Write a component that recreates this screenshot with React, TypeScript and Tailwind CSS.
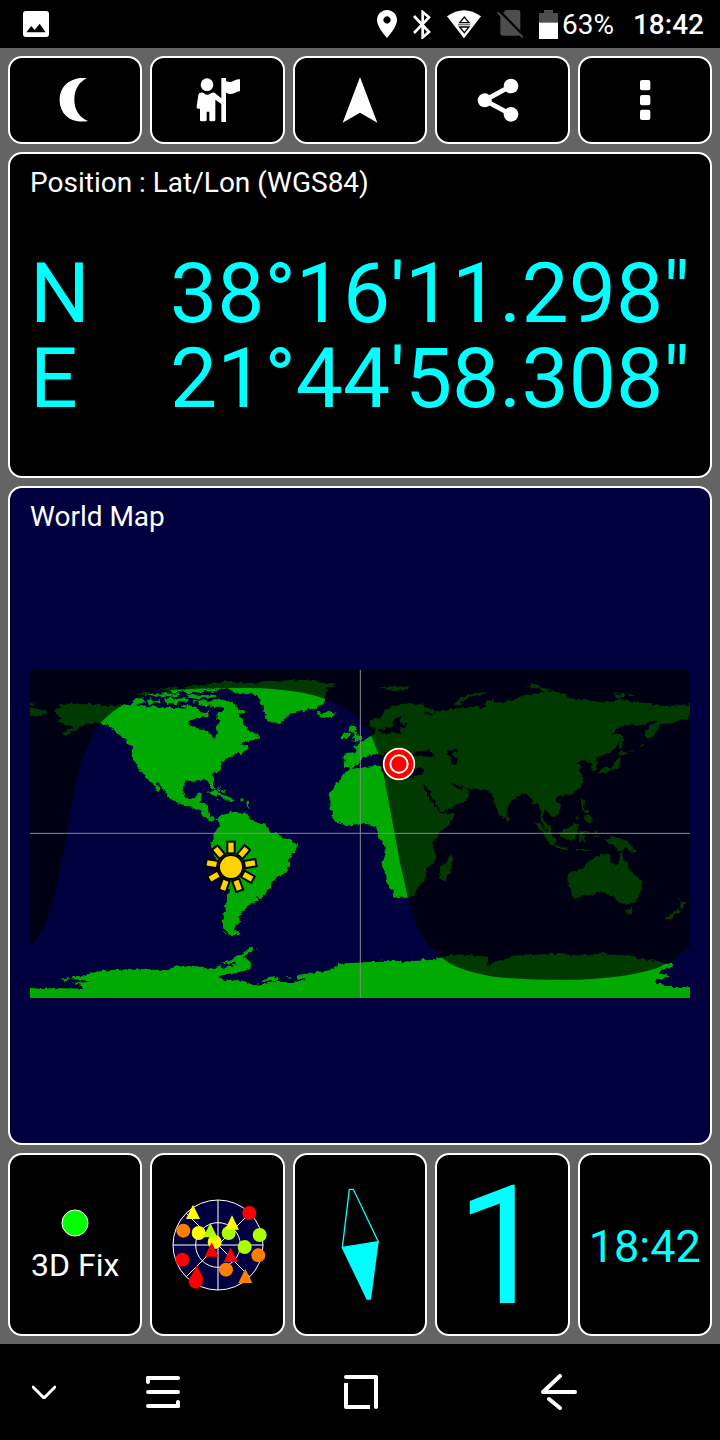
import type { ReactNode } from "react";

const OCEAN = "#00003f";
const LAND = "#00aa00";

// one path per land mass, 3 units to the pixel, 90N/180W in the top left corner
const landMasses = [
  // north and central america
  "M75 120 L90 113 L88 108 L95 105 L112 104 L116 101 L135 99 L150 103 L170 101 L186 104 L205 103 L214 107 L232 108 L244 106 L262 107 L282 104 L300 104 L315 100 L330 105 L345 107 L355 112 L370 109 L385 114 L402 112 L420 111 L430 115 L445 113 L460 116 L470 114 L475 104 L490 108 L500 112 L506 116 L510 126 L528 130 L540 118 L540 106 L520 108 L505 104 L502 92 L520 90 L532 95 L552 88 L575 89 L600 95 L618 104 L622 113 L635 118 L647 122 L645 130 L625 130 L628 140 L637 146 L640 160 L648 168 L658 184 L672 188 L678 192 L686 198 L687 206 L676 206 L668 211 L655 215 L630 220 L640 226 L654 225 L655 240 L640 244 L636 252 L620 248 L612 254 L605 264 L588 266 L580 276 L572 279 L577 290 L572 300 L560 306 L548 313 L546 320 L552 336 L552 356 L546 358 L540 350 L536 338 L530 329 L515 332 L500 330 L482 333 L470 330 L460 340 L458 365 L464 382 L480 388 L494 382 L498 374 L515 370 L515 380 L508 396 L530 403 L534 412 L536 430 L542 440 L555 446 L570 448 L568 456 L556 448 L540 452 L525 440 L516 432 L510 424 L490 418 L478 407 L450 402 L432 394 L410 378 L408 370 L400 358 L392 347 L384 340 L376 336 L382 346 L391 358 L388 362 L376 356 L372 346 L360 333 L350 324 L345 314 L332 306 L328 298 L320 286 L316 276 L309 270 L309 228 L300 226 L296 220 L290 218 L286 208 L277 204 L270 192 L258 186 L254 180 L244 175 L236 166 L220 162 L210 159 L195 160 L180 163 L172 158 L165 158 L156 170 L140 178 L122 184 L114 190 L102 196 L95 190 L110 182 L126 178 L130 168 L118 170 L104 166 L98 158 L82 155 L90 148 L100 146 L88 141 L80 135 Z",
  // far end of siberia, west of the date line
  "M-20 112 L0 112 L12 114 L25 122 L42 120 L58 128 L40 133 L38 140 L22 134 L0 137 L-20 137 Z M-20 95 L14 98 L14 104 L-20 103 Z",
  // arctic archipelago
  "M300 98 L312 90 L320 84 L342 86 L344 97 L332 100 L318 102 Z M322 72 L340 65 L362 64 L360 72 L340 76 Z M350 78 L362 74 L380 72 L405 70 L430 72 L446 69 L450 74 L430 80 L405 77 L380 80 Z M348 90 L360 87 L372 92 L390 88 L392 96 L372 98 L362 105 L350 97 Z M400 86 L420 84 L440 88 L460 84 L478 89 L468 98 L445 96 L440 103 L420 98 L410 103 L404 94 Z M412 60 L436 54 L450 58 L470 55 L492 58 L520 56 L556 60 L562 66 L545 68 L530 62 L510 68 L490 66 L470 70 L455 64 L432 68 Z M470 76 L492 72 L508 78 L540 74 L558 76 L560 82 L520 84 L496 86 L480 83 Z M488 90 L500 90 L498 98 L488 97 Z M450 104 L466 106 L474 114 L458 112 Z",
  // ellesmere
  "M458 54 L476 50 L492 47 L520 44 L545 42 L560 38 L585 34 L612 37 L640 36 L632 42 L610 46 L600 52 L585 56 L560 57 L530 56 L500 58 L478 56 Z M386 58 L412 52 L436 52 L430 58 L400 63 Z",
  // greenland
  "M592 54 L612 46 L640 40 L680 38 L712 36 L745 34 L780 30 L832 30 L862 32 L868 38 L890 38 L922 42 L905 46 L918 50 L898 52 L886 56 L892 64 L886 72 L884 82 L880 92 L878 102 L866 108 L864 116 L842 118 L820 124 L808 124 L794 130 L780 130 L776 138 L764 146 L757 154 L754 166 L738 158 L718 156 L710 146 L706 134 L700 122 L704 116 L696 104 L688 96 L692 90 L680 78 L668 72 L645 70 L625 73 L612 66 Z",
  // iceland, britain, ireland
  "M860 130 L866 125 L876 130 L890 127 L905 123 L917 130 L910 138 L890 144 L868 141 L872 135 Z",
  "M958 170 L966 166 L980 168 L977 178 L974 184 L985 196 L996 202 L998 208 L988 214 L962 216 L974 206 L966 202 L974 198 L970 188 L958 186 L954 176 Z M938 192 L946 187 L960 190 L954 206 L946 206 L934 208 Z",
  // caribbean
  "M526 370 L540 366 L555 362 L575 372 L590 378 L608 387 L590 390 L578 382 L560 376 L545 371 Z M588 386 L610 386 L608 392 L584 391 Z M560 390 L570 390 L566 394 Z M630 388 L640 388 L640 394 L632 394 Z M562 352 L568 352 L572 360 L566 362 Z M576 360 L584 362 L586 370 L578 366 Z M648 392 L656 392 L658 418 L652 412 Z",
  // south america
  "M564 450 L570 440 L578 434 L590 432 L600 425 L612 424 L620 430 L645 428 L650 436 L660 444 L668 450 L682 458 L696 461 L708 464 L714 474 L722 486 L735 490 L748 498 L758 504 L778 508 L792 514 L802 522 L803 532 L796 544 L786 552 L778 566 L777 584 L773 598 L765 612 L752 616 L740 620 L734 632 L724 636 L723 650 L712 662 L704 676 L694 684 L680 682 L683 692 L672 700 L652 709 L646 722 L634 728 L625 740 L631 752 L628 760 L618 768 L614 778 L626 784 L629 794 L612 796 L600 794 L586 786 L578 772 L576 752 L582 742 L580 734 L588 722 L585 710 L588 698 L593 684 L597 662 L595 630 L585 610 L570 595 L556 572 L552 556 L543 530 L544 512 L550 495 L560 478 L567 470 Z",
  // europe, asia and africa
  "M940 290 L944 272 L940 260 L945 252 L975 250 L980 240 L976 232 L965 230 L980 226 L1000 214 L1008 206 L1022 198 L1036 192 L1035 176 L1044 170 L1048 184 L1058 190 L1058 176 L1040 174 L1022 172 L1018 160 L1020 150 L1036 148 L1050 142 L1058 132 L1068 120 L1085 110 L1100 108 L1120 102 L1142 100 L1160 104 L1175 102 L1184 112 L1208 118 L1215 126 L1205 130 L1182 124 L1185 132 L1205 134 L1222 122 L1236 120 L1250 122 L1262 114 L1270 120 L1282 116 L1300 112 L1322 110 L1340 106 L1352 114 L1366 112 L1358 100 L1370 94 L1388 88 L1394 106 L1398 114 L1394 96 L1410 98 L1424 94 L1432 90 L1450 94 L1466 80 L1486 76 L1510 70 L1534 71 L1544 64 L1560 66 L1580 66 L1602 68 L1610 82 L1630 86 L1652 88 L1680 90 L1695 90 L1708 98 L1724 94 L1750 94 L1770 88 L1790 92 L1812 95 L1830 98 L1860 99 L1870 106 L1900 108 L1930 107 L1955 106 L1972 106 L1980 100 L2000 100 V133 L1980 133 L1972 148 L1950 150 L1932 158 L1910 162 L1890 160 L1884 178 L1870 196 L1858 208 L1848 200 L1845 186 L1856 172 L1876 160 L1884 155 L1860 154 L1842 166 L1810 163 L1778 168 L1760 176 L1746 192 L1766 192 L1774 194 L1782 210 L1774 236 L1768 236 L1771 212 L1766 222 L1758 232 L1740 248 L1724 256 L1706 260 L1698 270 L1702 300 L1688 308 L1685 282 L1672 274 L1655 270 L1640 280 L1654 288 L1650 302 L1660 322 L1656 340 L1650 356 L1622 372 L1604 376 L1582 378 L1576 390 L1588 402 L1592 416 L1588 432 L1574 443 L1562 436 L1552 424 L1540 422 L1538 442 L1548 458 L1560 466 L1570 500 L1566 508 L1554 484 L1534 456 L1530 420 L1526 402 L1510 404 L1508 390 L1490 372 L1468 374 L1450 388 L1436 404 L1432 420 L1430 438 L1420 448 L1404 424 L1394 400 L1390 376 L1372 360 L1335 356 L1310 356 L1290 346 L1270 340 L1262 331 L1270 350 L1282 356 L1296 356 L1302 346 L1308 356 L1320 364 L1314 380 L1296 400 L1262 414 L1236 424 L1228 420 L1222 402 L1206 380 L1180 338 L1182 356 L1200 392 L1218 414 L1234 430 L1256 430 L1275 428 L1266 452 L1250 470 L1230 484 L1222 498 L1208 520 L1210 535 L1218 556 L1216 580 L1198 588 L1188 598 L1188 620 L1178 632 L1168 650 L1155 668 L1140 680 L1116 680 L1090 683 L1088 664 L1076 646 L1070 634 L1068 612 L1055 586 L1064 560 L1064 530 L1058 514 L1044 500 L1044 478 L1038 468 L1020 464 L1012 458 L990 462 L962 465 L950 468 L934 458 L920 456 L904 436 L906 424 L896 412 L902 396 L896 376 L898 368 L908 360 L918 340 L934 330 L940 318 L946 306 L958 300 L960 292 Z",
  // arctic islands of russia and svalbard
  "M1272 102 L1284 92 L1294 82 L1312 76 L1338 70 L1366 66 L1370 70 L1344 76 L1316 82 L1302 92 L1290 100 L1298 106 L1282 106 Z M1050 52 L1068 50 L1100 52 L1120 48 L1140 50 L1128 58 L1112 60 L1088 67 L1070 58 Z M1490 50 L1502 44 L1520 42 L1532 52 L1550 56 L1568 58 L1560 63 L1540 66 L1530 56 L1506 54 Z M1750 70 L1770 72 L1790 72 L1784 78 L1772 78 L1774 86 L1762 84 Z M1794 72 L1810 74 L1816 80 L1802 82 Z",
  // japan, sakhalin tail, kurils
  "M1768 260 L1772 274 L1764 294 L1744 300 L1730 306 L1712 306 L1706 300 L1722 294 L1738 294 L1752 284 L1760 270 Z M1766 242 L1780 244 L1796 250 L1780 256 L1764 256 Z M1796 246 L1810 240 L1812 244 L1798 248 Z M1828 232 L1842 218 L1840 226 L1830 236 Z M1704 304 L1714 304 L1712 310 L1704 308 Z",
  // philippines, sri lanka, madagascar
  "M1654 388 L1664 388 L1664 402 L1660 412 L1674 420 L1680 428 L1672 430 L1660 422 L1652 408 Z M1664 438 L1680 434 L1686 444 L1684 458 L1676 458 L1664 450 Z M1636 448 L1652 426 L1648 434 L1638 450 Z M1430 436 L1442 450 L1434 458 L1428 450 Z M1263 557 L1268 572 L1260 604 L1250 626 L1238 633 L1228 622 L1230 596 L1234 586 L1250 576 L1256 564 Z",
  // indonesia and new guinea
  "M1514 456 L1526 462 L1546 480 L1560 492 L1574 508 L1578 518 L1574 530 L1562 522 L1550 510 L1540 492 L1526 474 Z M1575 527 L1590 528 L1615 532 L1614 537 L1580 534 Z M1588 486 L1606 478 L1622 468 L1634 458 L1644 464 L1642 482 L1643 490 L1636 498 L1630 510 L1604 508 L1592 500 Z M1648 486 L1660 484 L1680 482 L1678 487 L1660 489 L1654 494 L1668 494 L1662 500 L1668 516 L1662 514 L1656 502 L1654 520 L1646 516 L1650 500 Z M1636 536 L1656 538 L1670 540 L1686 536 L1684 541 L1668 544 L1640 541 Z M1694 482 L1700 480 L1702 492 L1696 490 Z M1692 498 L1706 498 L1704 502 L1692 502 Z M1722 505 L1734 510 L1746 502 L1768 504 L1788 510 L1800 520 L1806 530 L1820 542 L1820 550 L1806 548 L1794 536 L1782 534 L1774 544 L1758 538 L1750 522 L1732 516 Z",
  // australia, tasmania, new zealand
  "M1612 630 L1614 616 L1625 606 L1644 600 L1660 594 L1668 580 L1676 572 L1690 568 L1696 558 L1706 562 L1712 554 L1722 556 L1728 552 L1740 554 L1742 574 L1756 586 L1762 586 L1768 572 L1770 550 L1774 548 L1782 570 L1790 578 L1794 594 L1808 606 L1816 620 L1832 630 L1835 654 L1826 676 L1816 696 L1798 702 L1780 704 L1768 696 L1758 690 L1752 678 L1734 672 L1706 667 L1684 674 L1660 678 L1640 684 L1625 682 L1624 664 L1616 648 Z M1788 717 L1798 718 L1807 713 L1806 730 L1798 734 L1790 726 Z M1940 682 L1948 690 L1954 696 L1968 695 L1962 712 L1954 718 L1948 712 L1950 698 Z M1944 717 L1950 720 L1944 730 L1930 740 L1924 748 L1908 748 L1908 740 L1926 732 Z",
  // antarctica
  "M-20 953 L0 953 L35 957 L70 954 L160 956 L154 946 L130 938 L182 936 L155 929 L124 928 L128 918 L168 919 L172 910 L210 904 L250 899 L270 900 L300 896 L310 899 L345 896 L370 899 L420 901 L430 890 L440 886 L455 890 L500 889 L522 894 L560 896 L568 884 L582 886 L575 878 L600 872 L612 862 L626 856 L640 846 L652 842 L658 832 L670 830 L672 840 L660 846 L650 854 L640 862 L655 870 L660 884 L658 898 L640 904 L610 908 L580 916 L564 923 L590 932 L626 930 L650 936 L672 946 L700 941 L740 936 L790 936 L830 930 L800 924 L808 914 L840 910 L880 904 L902 900 L920 886 L940 880 L970 879 L1000 877 L1020 875 L1050 872 L1078 874 L1100 872 L1120 876 L1150 872 L1172 872 L1180 866 L1210 871 L1220 866 L1240 862 L1262 856 L1275 857 L1282 852 L1310 855 L1340 857 L1374 860 L1374 872 L1368 882 L1374 885 L1400 874 L1430 866 L1448 858 L1475 855 L1500 852 L1505 855 L1560 851 L1600 853 L1640 856 L1680 854 L1715 852 L1760 854 L1806 858 L1826 866 L1860 870 L1900 876 L1930 882 L1926 892 L1908 898 L1890 900 L1886 910 L1906 914 L1920 918 L1906 924 L1880 928 L1878 938 L1900 944 L1940 950 L1980 952 L2000 952 V1010 H-20 Z",
  "M690 937 L705 928 L718 920 L744 918 L749 926 L744 932 L715 934 Z M94 926 L112 922 L122 929 L104 930 Z M762 922 L788 922 L780 926 Z M682 838 H686 V841 H682 Z",
];

// hudson bay, mediterranean, black sea, caspian, baltic, weddell inlets
const inlandWaters = [
  "M474 160 L482 152 L494 146 L512 142 L534 142 L536 130 L540 114 L548 108 L562 114 L576 112 L584 120 L572 126 L564 132 L562 146 L568 154 L560 168 L562 184 L558 196 L555 208 L548 206 L546 196 L538 188 L524 180 L510 176 L490 172 L484 166 Z",
  "M965 296 L972 288 L984 284 L992 272 L1000 262 L1016 256 L1040 252 L1056 256 L1066 246 L1080 260 L1110 290 L1150 290 L1162 296 L1184 294 L1180 304 L1174 316 L1150 320 L1110 322 L1064 314 L1056 306 L1052 286 L1036 288 L1010 290 L990 294 Z",
  "M1148 256 L1160 244 L1178 242 L1190 246 L1184 236 L1196 236 L1204 250 L1216 258 L1210 262 L1190 260 L1176 254 L1160 260 Z",
  "M1254 240 L1270 238 L1282 234 L1280 248 L1266 250 L1272 260 L1282 268 L1282 284 L1266 282 L1262 266 L1256 256 Z",
  "M1050 176 L1062 182 L1066 172 L1080 174 L1094 168 L1088 156 L1098 148 L1112 138 L1124 132 L1112 144 L1108 154 L1118 164 L1142 160 L1128 168 L1112 172 L1110 188 L1080 190 L1062 190 Z",
  "M570 888 L588 880 L600 884 L616 874 L622 880 L610 884 L608 892 L594 886 L578 896 Z",
];

const NIGHT =
  "M0 0 H1980 V827 L1960 846 L1930 870 L1880 895 Q1830 910 1770 919 Q1690 930 1600 930 Q1480 930 1390 920 Q1300 905 1252 876 Q1200 838 1172 792 Q1148 745 1133 680 Q1120 620 1110 580 L1093 485 L1060 310 Q1048 255 1028 206 Q1008 160 960 126 Q900 82 810 67 Q740 56 660 54 Q520 53 430 60 Q350 68 300 92 Q250 118 210 160 Q170 220 145 310 Q124 400 108 510 L95 575 Q84 645 60 725 Q42 785 0 832 Z";

const rays = [0, 40, 80, 120, 160, 200, 240, 280, 320];

type Satellite = { shape: "dot" | "tri"; x: number; y: number; color: string };

const satellites: Satellite[] = [
  { shape: "dot", x: 746, y: 202, color: "#ff0000" },
  { shape: "tri", x: 577, y: 198, color: "#ffff00" },
  { shape: "dot", x: 548, y: 255, color: "#ff8000" },
  { shape: "dot", x: 594, y: 262, color: "#ffff00" },
  { shape: "dot", x: 684, y: 262, color: "#aaff00" },
  { shape: "tri", x: 694, y: 230, color: "#ffff00" },
  { shape: "dot", x: 777, y: 268, color: "#aaff00" },
  { shape: "dot", x: 642, y: 289, color: "#ffff00" },
  { shape: "tri", x: 629, y: 253, color: "#aaff00" },
  { shape: "dot", x: 732, y: 304, color: "#aaff00" },
  { shape: "dot", x: 773, y: 329, color: "#ff8000" },
  { shape: "tri", x: 633, y: 311, color: "#ff0000" },
  { shape: "tri", x: 690, y: 327, color: "#ff0000" },
  { shape: "dot", x: 545, y: 342, color: "#ff0000" },
  { shape: "dot", x: 676, y: 372, color: "#ff8000" },
  { shape: "tri", x: 588, y: 379, color: "#ff0000" },
  { shape: "dot", x: 585, y: 408, color: "#ff0000" },
  { shape: "tri", x: 734, y: 390, color: "#ff8000" },
];

const StatusBar = () => (
  <header className="flex h-12 items-center justify-between bg-black pl-[23px] pr-4 text-[28px] leading-8 text-white">
    <svg viewBox="0 0 78 78" className="h-[26px] w-[26px]" role="img" aria-label="Screenshot saved">
      <rect width="78" height="78" rx="9" fill="#fff" />
      <path d="M10 64 L25 45 L35 57 L50 38 L68 64 Z" fill="#000" />
    </svg>
    <div className="flex items-center gap-4">
      <svg viewBox="51 29 60 84" className="h-7 w-5">
        <path fill="#fff" fillRule="evenodd" d="M81 29 C97 29 111 42 111 59 C111 78 92 100 81 113 C70 100 51 78 51 59 C51 42 65 29 81 29 Z M81 48 a11 11 0 1 0 0.1 0 Z" />
      </svg>
      <svg viewBox="163 28 54 87" className="h-[29px] w-[18px]" fill="none" stroke="#fff" strokeWidth="8">
        <path d="M166 46 L211 94 L192 110 V34 L211 50 L166 97" />
      </svg>
      <svg viewBox="261 29 102 84" className="h-7 w-[34px]">
        <path d="M261 48 Q312 12 363 48 L312 114 Z" fill="#fff" />
        <path d="M299 67 L313 50 L327 67 Z M299 80 L313 97 L327 80 Z" fill="#fff" stroke="#000" strokeWidth="4" />
        <path d="M294 73 H331" stroke="#777" strokeWidth="4" />
      </svg>
      <svg viewBox="401 33 78 84" className="h-7 w-[26px]">
        <path d="M411 50 L428 33 H464 Q471 33 471 40 V103 Q471 110 464 110 H418 Q411 110 411 103 Z" fill="#4d4d4d" />
        <path d="M408 35 L482 112" stroke="#000" strokeWidth="7" />
        <path d="M403 40 L478 115" stroke="#4d4d4d" strokeWidth="6" />
      </svg>
      <div className="flex items-center gap-1 pr-[3px]">
        <svg viewBox="534 27 57 87" className="h-[29px] w-[19px]">
          <path d="M534 36 H549 V27 H576 V36 H591 V66 H534 Z" fill="#4d4d4d" />
          <path d="M534 65 H591 V114 H534 Z" fill="#fff" />
        </svg>
        <span className="pt-0.5">63%</span>
      </div>
      <span className="pt-0.5 font-medium">18:42</span>
    </div>
  </header>
);

const ToolButton = ({ label, viewBox, children }: { label: string; viewBox: string; children: ReactNode }) => (
  <button aria-label={label} className="flex h-[88px] items-center justify-center rounded-[14px] border-2 border-white bg-black">
    <svg viewBox={viewBox} className="h-11 w-11 overflow-visible" fill="#fff">
      {children}
    </svg>
  </button>
);

const Toolbar = () => (
  <div className="grid grid-cols-5 gap-2">
    <ToolButton label="Night mode" viewBox="160 234 132 132">
      <path d="M262 235 C222 229 180 252 180 300 C180 348 222 372 265 363 C240 352 224 330 224 299 C224 268 240 244 262 235 Z" />
    </ToolButton>
    <ToolButton label="Guide" viewBox="587 234 132 132">
      <circle cx="620" cy="254" r="19" />
      <path d="M596 280 Q606 275 611 280 Q620 289 632 280 Q640 274 646 281 L663 295 V234 H677 V243 Q689 249 700 242 Q710 236 719 238 V274 Q712 273 703 279 Q690 286 677 278 V366 H663 V312 L645 299 V360 Q645 364 640 364 H632 Q627 364 627 360 V335 H619 V360 Q618 364 614 364 H603 Q599 364 599 360 V326 H592 Q588 325 589 319 L594 285 Z" />
    </ToolButton>
    <ToolButton label="Navigate" viewBox="1014 234 132 132">
      <path d="M1080 231 L1132 368 L1080 338 L1028 368 Z" />
    </ToolButton>
    <ToolButton label="Share" viewBox="361 234 132 132">
      <circle cx="375" cy="301" r="21" />
      <circle cx="454" cy="258" r="22" />
      <circle cx="454" cy="343" r="22" />
      <path d="M454 258 L375 301 L454 343" fill="none" stroke="#fff" strokeWidth="14" />
    </ToolButton>
    <ToolButton label="More" viewBox="788 234 132 132">
      <rect x="839" y="240" width="31" height="31" rx="6" />
      <rect x="839" y="285" width="31" height="31" rx="6" />
      <rect x="839" y="329" width="31" height="31" rx="6" />
    </ToolButton>
  </div>
);

const WorldMap = () => (
  <svg viewBox="0 0 1980 984" className="w-full" role="img" aria-label="World map with day and night">
    {/* roughens the coast lines */}
    <filter id="coast" filterUnits="userSpaceOnUse" x="-20" y="0" width="2020" height="1010" colorInterpolationFilters="sRGB">
      <feTurbulence type="fractalNoise" baseFrequency="0.07" numOctaves="2" seed="4" />
      <feDisplacementMap in="SourceGraphic" scale="14" xChannelSelector="R" yChannelSelector="G" />
    </filter>
    <g filter="url(#coast)">
      <path d="M-20 0 H2000 V1010 H-20 Z" fill={OCEAN} />
      <g fill={LAND}>
        {landMasses.map((d) => (
          <path key={d.slice(0, 20)} d={d} />
        ))}
      </g>
      <g fill={OCEAN}>
        {inlandWaters.map((d) => (
          <path key={d.slice(0, 20)} d={d} />
        ))}
      </g>
    </g>
    <path d={NIGHT} fill="#000" fillOpacity="0.66" />
    <path d="M0 490 H1980 M991 0 V984" stroke="#888" strokeWidth="3" />
    <g transform="translate(603 591)" fill="#ffd200" stroke="#000" strokeWidth="6">
      {rays.map((angle) => (
        <rect key={angle} x="-11" y="-76" width="22" height="35" transform={`rotate(${angle})`} />
      ))}
      <circle r="36" />
    </g>
    <g transform="translate(1107 282)">
      <circle r="46" fill="#f00" stroke="#fff" strokeWidth="5" />
      <circle r="26" fill="none" stroke="#fff" strokeWidth="6" />
    </g>
  </svg>
);

const SkyPlot = () => (
  <svg viewBox="502 148 300 300" className="h-[100px] w-[100px]" role="img" aria-label="Satellites in view">
    <g fill="none" stroke="#fff" strokeWidth="3">
      <circle cx="652" cy="298" r="135" fill={OCEAN} />
      <circle cx="652" cy="298" r="67" />
      <path d="M517 298 H787 M652 163 V433 M557 203 L747 393 M747 203 L557 393" />
    </g>
    {satellites.map(({ shape, x, y, color }) =>
      shape === "dot" ? (
        <circle key={`${x}-${y}`} cx={x} cy={y} r="21" fill={color} />
      ) : (
        <path key={`${x}-${y}`} d={`M${x} ${y - 21} l21 43 h-42 Z`} fill={color} />
      )
    )}
  </svg>
);

const Tile = ({ label, children }: { label: string; children: ReactNode }) => (
  <button
    aria-label={label}
    className="flex h-[183px] flex-col items-center justify-center gap-3 rounded-[14px] border-2 border-white bg-black"
  >
    {children}
  </button>
);

const BottomTiles = () => (
  <div className="grid grid-cols-5 gap-2">
    <Tile label="3D Fix">
      <svg viewBox="0 0 28 28" className="h-7 w-7">
        <circle cx="14" cy="14" r="13" fill="#0f0" stroke="#fff" strokeWidth="1" />
      </svg>
      <span className="text-[32px] leading-8 text-white">3D Fix</span>
    </Tile>
    <Tile label="Satellites">
      <SkyPlot />
    </Tile>
    <Tile label="Compass">
      <svg viewBox="165 126 120 345" className="h-[115px] w-10">
        <path d="M193 133 H205 L280 290 L172 307 Z" fill="none" stroke="#0ff" strokeWidth="4" />
        <path d="M170 308 L281 290 L258 464 H245 Z" fill="#0ff" />
      </svg>
    </Tile>
    <Tile label="Current page">
      <span className="pt-1 text-[165px] leading-[165px] text-[#00ffff]">1</span>
    </Tile>
    <Tile label="Clock">
      <span className="pt-1 text-[45px] leading-[45px] text-[#00ffff]">18:42</span>
    </Tile>
  </div>
);

const NavBar = () => (
  <nav className="flex h-24 items-center bg-black pr-[62px]">
    <button aria-label="Hide navigation bar" className="flex w-16 justify-end pr-2">
      <svg viewBox="0 0 24 14" className="h-[14px] w-6" fill="none" stroke="#fff" strokeWidth="3" strokeLinecap="round">
        <path d="M1 2 L12 13 L23 2" />
      </svg>
    </button>
    <div className="grid flex-1 grid-cols-3 justify-items-center">
      <button aria-label="Recent apps">
        <svg viewBox="0 0 34 32" className="h-8 w-[34px]" fill="none" stroke="#fff" strokeWidth="4" strokeLinecap="round" strokeLinejoin="round">
          <path d="M2 2 H32 M2 16 H32 M2 30 H32" />
          <path d="M2 2 V6 M32 30 V26" />
        </svg>
      </button>
      <button aria-label="Home">
        <svg viewBox="0 0 34 34" className="h-[34px] w-[34px]" fill="none" stroke="#fff" strokeWidth="4" strokeLinecap="round" strokeLinejoin="round">
          <path d="M2 2 H32 V32" />
          <path d="M2 8 V32 H26" strokeLinecap="butt" />
        </svg>
      </button>
      <button aria-label="Back">
        <svg viewBox="0 0 36 36" className="h-9 w-9" fill="none" stroke="#fff" strokeWidth="4" strokeLinecap="round" strokeLinejoin="round">
          <path d="M34 18 H2 L19 2" />
          <path d="M8 25 L19 34" />
        </svg>
      </button>
    </div>
  </nav>
);

const App = () => {
  return (
    <div className="flex min-h-screen flex-col bg-[#646464] font-['Roboto',sans-serif]">
      <StatusBar />
      <main className="flex flex-1 flex-col gap-2 p-2">
        <Toolbar />
        <section className="flex h-[326px] flex-col rounded-[14px] border-2 border-white bg-black px-5 pb-1 pt-[13px]">
          <h2 className="text-[28px] leading-8 text-white">Position : Lat/Lon (WGS84)</h2>
          <div className="flex flex-1 flex-col justify-center text-[84px] leading-[85px] text-[#00ffff]">
            <p className="flex justify-between">
              <span>N</span>
              <span>38°16'11.298"</span>
            </p>
            <p className="flex justify-between">
              <span>E</span>
              <span>21°44'58.308"</span>
            </p>
          </div>
        </section>
        <section className="flex flex-1 flex-col rounded-[14px] border-2 border-white bg-[#00003f] px-5 pb-2 pt-[13px]">
          <h2 className="text-[28px] leading-8 text-white">World Map</h2>
          <div className="flex flex-1 items-center">
            <WorldMap />
          </div>
        </section>
        <BottomTiles />
      </main>
      <NavBar />
    </div>
  );
};

export default App;
